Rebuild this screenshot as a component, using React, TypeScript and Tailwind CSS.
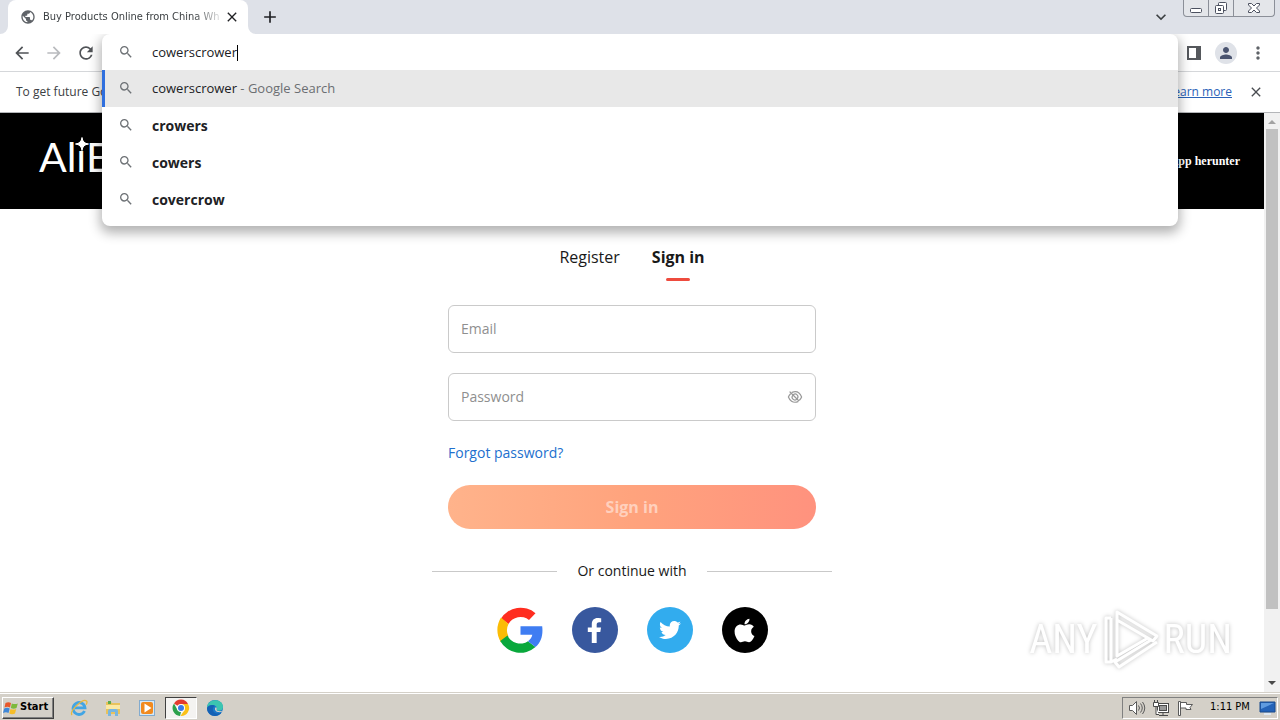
import React from "react";
import {
  MdAdd,
  MdArrowBack,
  MdArrowForward,
  MdClose,
  MdExpandMore,
  MdMoreVert,
  MdPerson,
  MdPublic,
  MdRefresh,
  MdSearch,
} from "react-icons/md";
import { FaApple, FaFacebookF, FaTwitter } from "react-icons/fa";
import clsx from "clsx";

const suggestions = ["crowers", "cowers", "covercrow"];

const WindowControls: React.FC = () => (
  <div className="mr-[5px] flex h-[17px] w-[92px] rounded-b-[4px] border border-t-0 border-[#8b8f98] bg-[#e4e6ea] text-[#4c5160]">
    <button aria-label="Minimize" className="flex w-[25px] items-center justify-center border-r border-[#8b8f98]">
      <svg width="14" height="16" viewBox="0 0 14 16" fill="#fff" stroke="currentColor">
        <rect x="1.5" y="8.5" width="11" height="4" rx="1" />
      </svg>
    </button>
    <button aria-label="Restore" className="flex w-[25px] items-center justify-center border-r border-[#8b8f98]">
      <svg width="14" height="16" viewBox="0 0 14 16" fill="#fff" stroke="currentColor">
        <rect x="4.5" y="2.5" width="8" height="8" rx="1" />
        <rect x="1.5" y="5.5" width="8" height="8" rx="1" />
        <rect x="4.5" y="8.5" width="2" height="2" />
      </svg>
    </button>
    <button aria-label="Close window" className="flex flex-1 items-center justify-center">
      <svg width="14" height="16" viewBox="0 0 14 16" fill="#fff" stroke="currentColor">
        <path d="M1.5 3.5h3L7 6l2.500-2.500h3V5L9.500 8l3 3v1.500h-3L7 10l-2.500 2.500h-3V11l3-3-3-3z" />
      </svg>
    </button>
  </div>
);

const TabStrip: React.FC = () => (
  <div className="flex h-[34px] items-start bg-[#dee1e8] pl-2">
    <div className="relative flex h-[34px] w-60 items-center rounded-t-lg bg-white pr-2 pl-3 text-[#3c4043]">
      <svg className="absolute bottom-0 -left-2" width="8" height="8" fill="#fff">
        <path d="M8 0v8H0a8 8 0 0 0 8-8z" />
      </svg>
      <svg className="absolute -right-2 bottom-0" width="8" height="8" fill="#fff">
        <path d="M0 0v8h8a8 8 0 0 1-8-8z" />
      </svg>
      <MdPublic className="size-4 shrink-0 text-[#5f6368]" />
      <span className="ml-[7px] min-w-0 flex-1 font-['DejaVu_Sans_Condensed','DejaVu_Sans',sans-serif] text-[11px] whitespace-nowrap [mask-image:linear-gradient(to_right,#000_150px,transparent_182px)]">
        Buy Products Online from China Who
      </span>
      <button aria-label="Close tab" className="ml-1 text-[#202124]">
        <MdClose className="size-4" />
      </button>
    </div>
    <button aria-label="New tab" className="ml-3 flex h-[34px] items-center text-[#202124]">
      <MdAdd className="size-5" />
    </button>
    <button aria-label="Search tabs" className="mr-3 ml-auto flex h-[34px] items-center text-[#3c4043]">
      <MdExpandMore className="size-5" />
    </button>
    <WindowControls />
  </div>
);

const Omnibox: React.FC = () => (
  <div className="absolute inset-x-0 top-0 z-10 h-48 overflow-hidden rounded-lg bg-white text-[13px] text-[#202124] shadow-[0_5px_12px_2px_rgba(0,0,0,0.3)] [clip-path:inset(0_-24px_-32px_-24px)]">
    <div className="flex h-9 items-center pl-4">
      <MdSearch className="size-4 shrink-0 text-[#6e7276]" />
      <div className="ml-[18px] flex flex-1 items-center pt-[2px]">
        <input
          type="text"
          aria-label="Address and search bar"
          defaultValue="cowerscrower"
          className="field-sizing-content bg-transparent outline-none"
        />
        <span className="h-4 w-px bg-black" />
      </div>
    </div>
    <ul>
      <li className="flex h-[37px] items-center border-l-3 border-[#2f6fde] bg-[#e8e8e8] pl-[13px]">
        <MdSearch className="mb-px size-4 text-[#6e7276]" />
        <span className="ml-[18px]">
          cowerscrower <span className="text-[#6b6e72]">- Google Search</span>
        </span>
      </li>
      {suggestions.map((text) => (
        <li key={text} className="flex h-[37px] items-center pl-4">
          <MdSearch className="mb-px size-4 text-[#6e7276]" />
          <span className="ml-[18px] text-[14px] font-bold">{text}</span>
        </li>
      ))}
    </ul>
  </div>
);

const Toolbar: React.FC = () => (
  <div className="flex h-[38px] border-b border-[#d5d7da] bg-white text-[#5f6368]">
    <div className="flex w-[102px] items-center gap-3 pl-3">
      <button aria-label="Back">
        <MdArrowBack className="size-5 text-[#505357]" />
      </button>
      <button aria-label="Forward">
        <MdArrowForward className="size-5 text-[#b9bbbe]" />
      </button>
      <button aria-label="Reload">
        <MdRefresh className="size-5 text-[#505357]" />
      </button>
    </div>
    <div className="relative flex-1">
      <Omnibox />
    </div>
    <div className="flex w-[102px] items-center pl-2">
      <button aria-label="Side panel" className="flex w-4 justify-center">
        <svg width="14" height="14" viewBox="0 0 14 14">
          <path d="M0 0h14v14H0zM2 2v10h7V2z" fill="#55585c" fillRule="evenodd" />
        </svg>
      </button>
      <button aria-label="Profile" className="ml-[13px] flex size-[22px] items-center justify-center rounded-full bg-[#dfe2e8]">
        <MdPerson className="size-[18px] text-[#4a5470]" />
      </button>
      <button aria-label="Menu" className="ml-[11px]">
        <MdMoreVert className="size-5" />
      </button>
    </div>
  </div>
);

const InfoBar: React.FC = () => (
  <div className="flex h-[41px] items-center border-b border-[#b4b6b9] bg-white pr-4 pl-4 text-[12px] text-[#3c4043]">
    <span>To get future Google</span>
    <a href="#learn" className="ml-auto text-[#2a62b8] underline">
      Learn more
    </a>
    <button aria-label="Dismiss" className="ml-4 text-[#4a4d51]">
      <MdClose className="size-4" />
    </button>
  </div>
);

const PageHeader: React.FC = () => (
  <header className="flex h-24 items-center justify-between bg-black px-6 text-white">
    <a href="#home" aria-label="AliExpress" className="relative ml-[15px] pb-2 font-['Lato',sans-serif] text-[41px] leading-[50px]">
      AlıE
      <svg className="absolute top-[5px] left-9" width="14" height="14" viewBox="0 0 14 14">
        <path d="M7 .5Q7.600 6.400 13.500 7 7.600 7.600 7 13.500 6.400 7.600.5 7 6.400 6.400 7 .5z" fill="#fff" stroke="#fff" />
      </svg>
    </a>
    <a href="#app" className="font-['Liberation_Serif',serif] text-[12px] font-bold">
      App herunter
    </a>
  </header>
);

const GoogleLogo: React.FC = () => (
  <svg width="46" height="46" viewBox="0 0 46 46">
    <path d="M4 11.500A23 23 0 0 1 38.500 6.300L32 12.900A13.800 13.800 0 0 0 11.500 17z" fill="#ff2d20" />
    <path d="M4 10.600A23 23 0 0 0 4 35.400L11.500 29.500A13.800 13.800 0 0 1 11.500 17z" fill="#fbbc05" />
    <path d="M3.200 34A23 23 0 0 0 38.500 40L31 34.200A14 14 0 0 1 10.500 28.500z" fill="#09a83c" />
    <path d="M23.500 19.200h21.700C46.200 28 44.300 35 38.500 40L31 34.200c2.400-1.700 3.900-4 4.300-6.400H23.500z" fill="#3f7df2" />
  </svg>
);

const LoginForm: React.FC = () => (
  <form className="mx-auto flex w-[400px] flex-col px-4 pt-9">
    <div className="flex justify-center gap-8 text-[16px] leading-6 text-[#191919]">
      <button type="button" className="h-9 pb-3">
        Register
      </button>
      <button type="button" className="flex h-9 flex-col items-center justify-between font-bold">
        Sign in
        <span className="h-[3px] w-6 rounded-full bg-[#ee4b3e]" />
      </button>
    </div>
    <input
      type="email"
      aria-label="Email"
      placeholder="Email"
      className="mt-6 h-12 w-full rounded-md border border-[#cacaca] px-3 pb-[2px] text-[14px] placeholder:text-[#8f8f8f]"
    />
    <div className="mt-5 flex h-12 items-center rounded-md border border-[#cacaca] px-3">
      <input
        type="password"
        aria-label="Password"
        placeholder="Password"
        className="min-w-0 flex-1 pb-[2px] text-[14px] outline-none placeholder:text-[#8f8f8f]"
      />
      <button type="button" aria-label="Show password">
        <svg width="16" height="16" viewBox="0 0 16 16" fill="none" stroke="#999" strokeWidth="1.200" strokeLinecap="round">
          <path d="M5 3.400C10.500 1.200 13.400 5 14.600 8c-.5 1.200-1.200 2.200-2 3M11 12.600C5.500 14.800 2.600 11 1.400 8c.5-1.200 1.200-2.200 2-3" />
          <path d="M6.500 5.600A2.800 2.800 0 0 1 10.400 9.500M9.500 10.400A2.800 2.800 0 0 1 5.600 6.500M3 3l8.500 8.500" />
        </svg>
      </button>
    </div>
    <a href="#forgot" className="mt-[21px] self-start text-[14px] leading-[22px] text-[#2270ce]">
      Forgot password?
    </a>
    <button
      type="button"
      className="mt-[21px] h-11 rounded-full bg-gradient-to-r from-[#ffb38b] via-[#ffa37d] to-[#ff927e] text-[16px] font-bold text-[#ffd0bd]"
    >
      Sign in
    </button>
    <div className="-mx-4 mt-8 flex items-center gap-5 text-[14px] leading-5 text-[#191919]">
      <span className="h-px flex-1 bg-[#c9c9c9]" />
      Or continue with
      <span className="h-px flex-1 bg-[#c9c9c9]" />
    </div>
    <div className="mt-[26px] flex justify-center gap-[29px] text-white">
      <button type="button" aria-label="Google">
        <GoogleLogo />
      </button>
      <button type="button" aria-label="Facebook" className="flex size-[46px] items-center justify-center rounded-full bg-[#38589e]">
        <FaFacebookF className="size-[25px]" />
      </button>
      <button type="button" aria-label="Twitter" className="flex size-[46px] items-center justify-center rounded-full bg-[#32acee]">
        <FaTwitter className="size-[22px]" />
      </button>
      <button type="button" aria-label="Apple" className="flex size-[46px] items-center justify-center rounded-full bg-black">
        <FaApple className="size-[27px]" />
      </button>
    </div>
  </form>
);

const ScrollBar: React.FC = () => (
  <div className="flex w-4 flex-col bg-[#f1f1f1]">
    <svg width="16" height="16" fill="#a3a3a3">
      <path d="M4 11h8L8 7z" />
    </svg>
    <div className="mx-[2px] flex-[480] bg-[#c1c1c1]" />
    <div className="flex-[66]" />
    <svg width="16" height="17" fill="#4a4a4a">
      <path d="M4 6h8l-4 4z" />
    </svg>
  </div>
);

const Watermark: React.FC = () => (
  <div className="flex items-center gap-1 font-['Roboto_Condensed','Liberation_Sans',sans-serif] text-[40px] leading-[64px] text-white [filter:drop-shadow(0_0_2px_rgba(0,0,0,0.25))]">
    <span>ANY</span>
    <svg width="58" height="64" viewBox="0 0 58 64" fill="none" stroke="#fff" strokeWidth="3" strokeLinejoin="round">
      <path d="M15 17V4l40 24-4 5-36-21" />
      <path d="M9 10H4v44h5M15 17v31l31-18M9 10v44l6-3" />
      <path d="M55 34 17 59l-4-5 36-22" />
    </svg>
    <span>RUN</span>
  </div>
);

const IeIcon = () => (
  <svg width="18" height="18" viewBox="0 0 18 18" fill="none">
    <path d="M14.500 12A6 6 0 1 1 15 8.800H5" stroke="#42a5e4" strokeWidth="2.800" />
    <path d="M2 16C-1 12 13-1 16.500 2c1 1 .3 2.500-.4 3.600" stroke="#e9b83c" strokeWidth="1.300" />
  </svg>
);

const FolderIcon = () => (
  <svg width="18" height="18" viewBox="0 0 18 18">
    <path d="M2 3h5l1 1h8v11H2z" fill="#e8c25c" />
    <path d="M4 2h3v3H4z" fill="#5cab4c" />
    <path d="M2 6h14v4H2z" fill="#fbe9a4" />
    <path d="M4 17v-5q0-2 2-2h6q2 0 2 2v5h-3v-4H7v4z" fill="#78b6e0" />
  </svg>
);

const MediaIcon = () => (
  <svg width="18" height="18" viewBox="0 0 18 18">
    <rect x="1.500" y="1.500" width="15" height="15" fill="#d6e9f7" stroke="#82abcf" />
    <rect x="3" y="3" width="12" height="12" rx="2" fill="#f18a1f" />
    <path d="m6.500 4.500 7 4.500-7 4.500z" fill="#fff" />
  </svg>
);

const ChromeIcon = () => (
  <svg width="18" height="18" viewBox="0 0 18 18">
    <path d="M9 9 2 4.500A8 8 0 0 1 16 5H9z" fill="#e33b2e" />
    <path d="M9 5h7A8 8 0 0 1 8.500 17L12.500 11z" fill="#fbc116" />
    <path d="M2 4.500 5.500 11l3.500 2-1 4A8 8 0 0 1 2 4.500z" fill="#2da14c" />
    <circle cx="9" cy="9" r="4" fill="#fff" />
    <circle cx="9" cy="9" r="3" fill="#3a7be8" />
  </svg>
);

const EdgeIcon = () => (
  <svg width="18" height="18" viewBox="0 0 18 18">
    <circle cx="9" cy="9" r="8" fill="#1b78c9" />
    <path d="M1 9C1-1 17-1 17 8c0 4-5 4.500-6.500 3C12 8 9 5.500 6 6 3 6.500 1.500 8 1 9z" fill="#3cc5b0" />
    <path d="M1 9c1-3 6-4 8-2-2 1-3 3-1.500 5.500 2 2.500 5 2.500 8 1C12 19 1 18 1 9z" fill="#1561b4" />
    <path d="M10 8c-2 1.500-1 4.500 2 5 2 .4 4 0 5-1.500-2 1-5.500 1-6.500-.5.500-1 .3-2-.5-3z" fill="#d4d0c8" />
  </svg>
);

const launchers = [
  { name: "Internet Explorer", Icon: IeIcon },
  { name: "Explorer", Icon: FolderIcon },
  { name: "Media Player", Icon: MediaIcon },
  { name: "Chrome", Icon: ChromeIcon, active: true },
  { name: "Edge", Icon: EdgeIcon },
];

const Taskbar: React.FC = () => (
  <footer className="flex h-7 items-center border-t border-[#d4d0c8] bg-[#d4d0c8] px-[2px] font-['DejaVu_Sans_Condensed','DejaVu_Sans',sans-serif] text-[11px] text-black shadow-[inset_0_1px_0_#fff]">
    <button className="mt-[2px] flex h-[22px] w-[52px] items-center gap-px border border-t-white border-r-[#404040] border-b-[#404040] border-l-white font-bold shadow-[inset_-1px_-1px_0_#808080]">
      <svg width="16" height="16" viewBox="0 0 16 16" className="shrink-0">
        <path d="M2.500 3q3-1.500 5.500 0L7 7.500Q4.500 6 1.500 7.500z" fill="#e8572a" />
        <path d="M8.800 3.400q3 1.400 6 0L13.500 8q-3 1.400-5.700 0z" fill="#7db93c" />
        <path d="M1.200 8.500q3-1.500 5.500 0L5.500 13Q3 11.500 0 13z" fill="#3f87d8" />
        <path d="M7.500 8.900q3 1.400 5.700 0L12 13.500q-3 1.400-5.700 0z" fill="#f6bd28" />
      </svg>
      Start
    </button>
    <nav className="mt-[2px] ml-[9px] flex gap-[2px]">
      {launchers.map(({ name, Icon, active }) => (
        <button
          key={name}
          aria-label={name}
          className={clsx(
            "flex h-[22px] w-8 items-center justify-center",
            active && "border border-t-[#404040] border-r-white border-b-white border-l-[#404040] bg-[#f4f3f1]",
          )}
        >
          <Icon />
        </button>
      ))}
    </nav>
    <div className="mt-[2px] ml-auto flex h-[22px] w-[156px] items-center border border-t-[#808080] border-r-white border-b-white border-l-[#808080] pl-[5px]">
      <svg width="18" height="18" viewBox="0 0 18 18" fill="#fff" stroke="#5a5a5a">
        <path d="M1.500 6.500h3l4-4v13l-4-4h-3z" />
        <path d="M10.500 6.500q2 2.500 0 5M12.500 4.500q3.500 4.500 0 9M14.500 3q4.500 6 0 12" fill="none" />
      </svg>
      <svg className="ml-[6px]" width="18" height="18" viewBox="0 0 18 18" fill="#fff" stroke="#4a4a4a">
        <rect x="5.500" y="4.500" width="11" height="9" />
        <rect x="7.500" y="6.500" width="7" height="5" fill="#999" />
        <path d="M7 16.500h9M11 14v2" />
        <path d="M2.500 1v3M5.500 1v3M1.500 3.500h5v4h-5zM4 8v7.500h3" />
      </svg>
      <svg className="ml-[6px]" width="18" height="18" viewBox="0 0 18 18" fill="#fff" stroke="#5a5a5a">
        <path d="M2.500 2.500h2v14h-2zM4.500 3.500h6v2h6l-2.500 3 1 2h-5v-1.500H4.500z" />
      </svg>
      <span className="ml-4 whitespace-nowrap">1:11 PM</span>
      <svg className="mr-px ml-auto" width="17" height="16" viewBox="0 0 17 16">
        <path d="M1 2h15v10H1z" fill="#2463b8" stroke="#184a8c" />
        <path d="M2 3h13L2 9z" fill="#5f9be0" />
        <path d="M5 13h7v2H5z" fill="#dfe8f2" />
      </svg>
    </div>
  </footer>
);

export default function App() {
  return (
    <div className="flex h-screen flex-col overflow-hidden bg-white font-['Open_Sans',sans-serif]">
      <TabStrip />
      <Toolbar />
      <InfoBar />
      <div className="relative flex min-h-0 flex-1">
        <main className="min-w-0 flex-1 overflow-hidden">
          <PageHeader />
          <LoginForm />
        </main>
        <ScrollBar />
        <div className="pointer-events-none absolute right-12 bottom-5">
          <Watermark />
        </div>
      </div>
      <Taskbar />
    </div>
  );
}
